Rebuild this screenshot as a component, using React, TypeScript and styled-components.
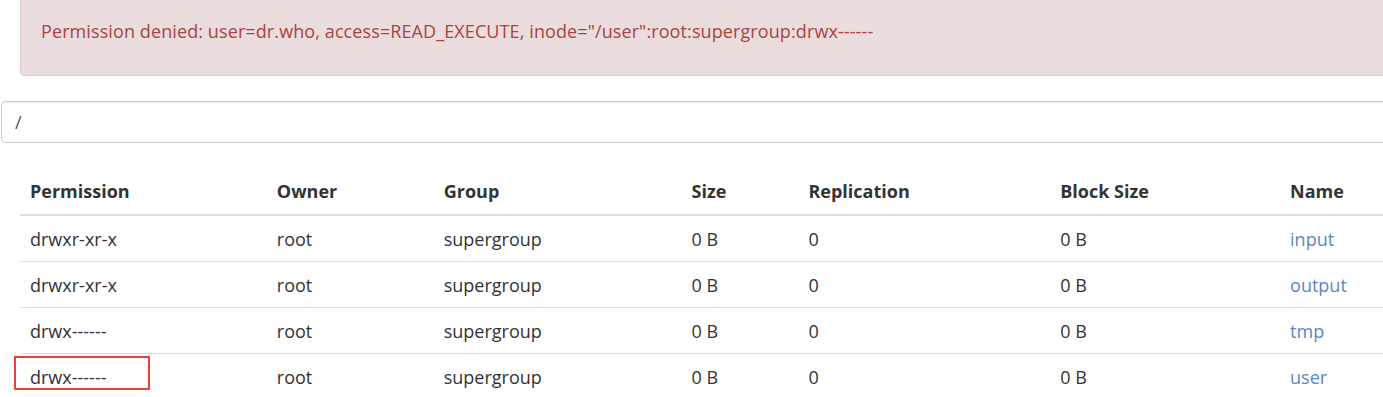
import React from "react";
import styled, { createGlobalStyle } from "styled-components";

const GlobalStyle = createGlobalStyle`
  html, body {
    margin: 0;
    padding: 0;
    background: #ffffff;
    overflow: hidden;
  }
  body {
    font-family: "Open Sans", "Noto Sans CJK SC", sans-serif;
    color: #333333;
  }
`;

interface Entry {
  permission: string;
  owner: string;
  group: string;
  size: string;
  replication: string;
  blockSize: string;
  name: string;
}

const entries: Entry[] = [
  { permission: "drwxr-xr-x", owner: "root", group: "supergroup", size: "0 B", replication: "0", blockSize: "0 B", name: "input" },
  { permission: "drwxr-xr-x", owner: "root", group: "supergroup", size: "0 B", replication: "0", blockSize: "0 B", name: "output" },
  { permission: "drwx------", owner: "root", group: "supergroup", size: "0 B", replication: "0", blockSize: "0 B", name: "tmp" },
  { permission: "drwx------", owner: "root", group: "supergroup", size: "0 B", replication: "0", blockSize: "0 B", name: "user" },
];

const columns = [
  { title: "Permission", width: 247 },
  { title: "Owner", width: 167 },
  { title: "Group", width: 248 },
  { title: "Size", width: 117 },
  { title: "Replication", width: 252 },
  { title: "Block Size", width: 230 },
  { title: "Name", width: 140 },
];

const App: React.FC = () => {
  return (
    <>
      <GlobalStyle />
      <Page>
        <Alert>
          Permission denied: user=dr.who, access=READ_EXECUTE,
          inode="/user":root:supergroup:drwx------
        </Alert>

        <PathInput type="text" defaultValue="/" readOnly />

        <TableWrap>
          <Table>
            <colgroup>
              {columns.map((c) => (
                <col key={c.title} style={{ width: c.width }} />
              ))}
            </colgroup>
            <thead>
              <tr>
                {columns.map((c) => (
                  <Th key={c.title}>{c.title}</Th>
                ))}
              </tr>
            </thead>
            <tbody>
              {entries.map((e) => (
                <tr key={e.name}>
                  <Td>{e.permission}</Td>
                  <Td>{e.owner}</Td>
                  <Td>{e.group}</Td>
                  <Td>{e.size}</Td>
                  <Td>{e.replication}</Td>
                  <Td>{e.blockSize}</Td>
                  <Td>
                    <FileLink href="#">{e.name}</FileLink>
                  </Td>
                </tr>
              ))}
            </tbody>
          </Table>
          <Highlight />
        </TableWrap>
      </Page>
    </>
  );
};

export default App;

/* ──────────────────────────────────────────────
   Styled components
   ────────────────────────────────────────────── */

const Page = styled.div`
  width: 1420px;
  margin-top: -20px;
  display: flex;
  flex-direction: column;
`;

const Alert = styled.div`
  margin-left: 20px;
  padding: 38px 20px 32px;
  background: #ebdcdd;
  border: 1px solid #e4ccd2;
  border-radius: 4px;
  color: #a94442;
  font-size: 18px;
  letter-spacing: 0.1px;
  line-height: 24px;
`;

const PathInput = styled.input`
  margin: 25px 0 0 1px;
  height: 42px;
  padding: 0 13px;
  border: 1px solid #cccccc;
  border-radius: 4px;
  box-shadow: inset 0 1px 1px rgba(0, 0, 0, 0.075);
  font-family: inherit;
  font-size: 18px;
  color: #555555;
  box-sizing: border-box;
  outline: none;
`;

const TableWrap = styled.div`
  position: relative;
  margin: 25px 0 0 20px;
`;

const Table = styled.table`
  border-collapse: collapse;
  table-layout: fixed;
  font-size: 18px;
`;

const Th = styled.th`
  text-align: left;
  font-weight: 700;
  color: #333333;
  height: 46px;
  padding: 0 10px;
  border-bottom: 2px solid #dddddd;
  vertical-align: middle;
`;

const Td = styled.td`
  height: 45px;
  padding: 0 10px;
  border-top: 1px solid #dddddd;
  vertical-align: middle;
`;

const FileLink = styled.a`
  color: #5b86c5;
  text-decoration: none;
`;

const Highlight = styled.div`
  position: absolute;
  left: -6px;
  top: 188px;
  width: 136px;
  height: 34px;
  box-sizing: border-box;
  border: 2px solid #f03d3d;
`;
